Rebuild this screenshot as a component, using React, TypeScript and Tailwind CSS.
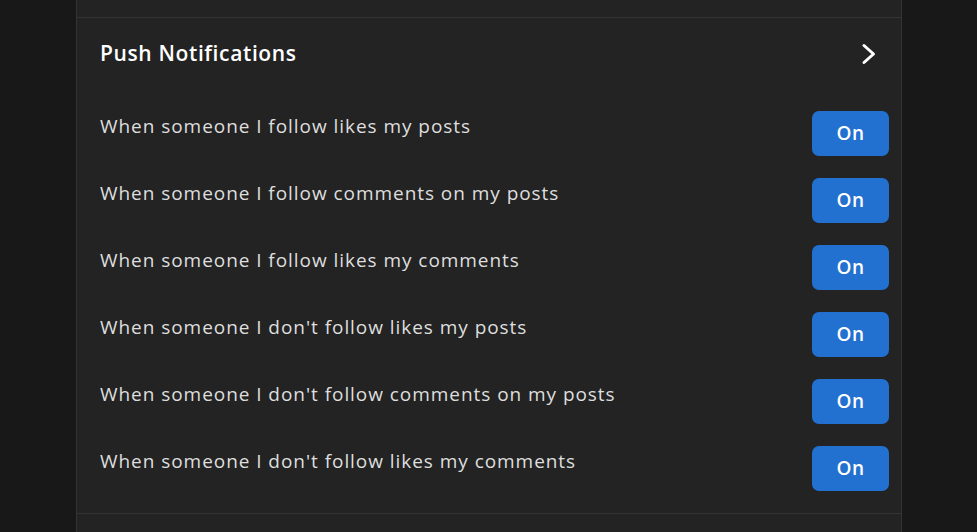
const settings = [
  'When someone I follow likes my posts',
  'When someone I follow comments on my posts',
  'When someone I follow likes my comments',
  "When someone I don't follow likes my posts",
  "When someone I don't follow comments on my posts",
  "When someone I don't follow likes my comments",
];

export default function App() {
  return (
    <div className="min-h-[532px] bg-[#181818] font-['Open_Sans',sans-serif]">
      <div className="ml-[76px] w-[826px] border-x border-[#333333] bg-[#232323]">
        {/* previous section tail */}
        <div className="h-[17px]"></div>

        <section className="border-t border-[#333333]">
          <div className="flex h-[72px] items-center justify-between pl-[23px] pr-[24px]">
            <h2 className="text-[21px] font-semibold tracking-[0.03em] text-white">Push Notifications</h2>
            <svg width="16" height="22" viewBox="0 0 16 22" fill="none" stroke="white" strokeWidth={3} strokeLinecap="round" strokeLinejoin="round">
              <polyline points="3,2.5 12.5,11 3,19.5" />
            </svg>
          </div>

          <ul className="flex flex-col gap-[22px] pb-[22px] pl-[23px] pr-[12px] pt-[21px]">
            {settings.map((label, i) => (
              <li key={i} className="flex items-start justify-between">
                <span className="pt-[3px] text-[19px] font-medium leading-6 tracking-[0.05em] text-[#dedede]">{label}</span>
                <button className="h-[45px] w-[77px] rounded-[7px] bg-[#2270d0] text-[19px] font-semibold tracking-[0.03em] text-white">
                  On
                </button>
              </li>
            ))}
          </ul>
        </section>

        <div className="h-[19px] border-t border-[#333333]"></div>
      </div>
    </div>
  );
}
